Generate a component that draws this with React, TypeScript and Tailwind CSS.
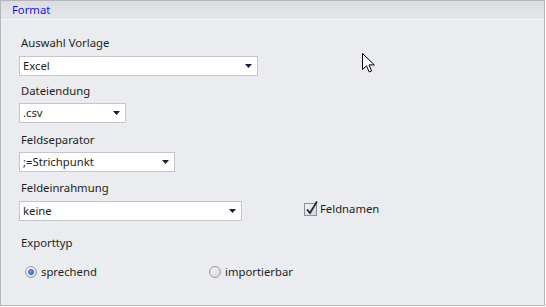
import React from 'react';

const font = { fontFamily: '"Noto Sans", "Open Sans", Arial, sans-serif' };

function Arrow() {
  return (
    <svg width="7" height="4" viewBox="0 0 7 4" className="block">
      <path d="M0 0H7L3.5 4Z" fill="#1b1b3a" />
    </svg>
  );
}

function Combo({ value, width }: { value: string; width: string }) {
  return (
    <div className={`${width} h-[20px] bg-white border border-[#c5c6cb] flex items-center justify-between pl-[3px] pr-[5px]`}>
      <span className="text-[11.3px] leading-[18px] text-[#1e1e1e]">{value}</span>
      <Arrow />
    </div>
  );
}

function Label({ children, className = '' }: { children: React.ReactNode; className?: string }) {
  return <div className={`pl-[2px] text-[11.3px] leading-[16px] text-[#1e1e1e] ${className}`}>{children}</div>;
}

function Radio({ checked }: { checked?: boolean }) {
  return (
    <span className="w-[12px] h-[12px] rounded-full border border-[#9a9ca3] bg-gradient-to-br from-[#f4f4f6] to-[#d6d7dc] flex items-center justify-center">
      {checked && <span className="w-[6px] h-[6px] rounded-full bg-gradient-to-br from-[#8fb4f0] to-[#2a5fc8] border border-[#3a64b8]" />}
    </span>
  );
}

export default function App() {
  return (
    <div className="w-[546px] h-[307px] bg-white" style={font}>
      <div className="relative w-[545px] h-[306px] border border-[#b4b6bd] bg-[#ebecef] flex flex-col">
        <div className="h-[19px] bg-gradient-to-b from-[#dcdde2] to-[#e6e7ea] border-b border-[#f6f6f8] flex items-center pl-[11px]">
          <span className="text-[11.3px] leading-[16px] text-[#1414f0]">Format</span>
        </div>

        <div className="flex flex-col pl-[18px] pt-[15px]">
          <Label>Auswahl Vorlage</Label>
          <div className="mt-[5px]"><Combo value="Excel" width="w-[239px]" /></div>

          <Label className="mt-[7px]">Dateiendung</Label>
          <div className="mt-[4px]"><Combo value=".csv" width="w-[107px]" /></div>

          <Label className="mt-[9px]">Feldseparator</Label>
          <div className="mt-[4px]"><Combo value=";=Strichpunkt" width="w-[156px]" /></div>

          <Label className="mt-[8px]">Feldeinrahmung</Label>
          <div className="mt-[5px] flex items-center">
            <Combo value="keine" width="w-[223px]" />
            <div className="ml-[62px] flex items-center gap-[3px] -mt-[4px]">
              <span className="relative w-[13px] h-[13px] border border-[#8e9097] bg-gradient-to-br from-[#f2f2f4] to-[#d4d5da]">
                <svg width="14" height="16" viewBox="0 0 14 16" className="absolute left-[0px] -top-[4px]">
                  <path d="M2 9.5L5 13L12 1.5" fill="none" stroke="#22263a" strokeWidth="1.8" />
                </svg>
              </span>
              <span className="text-[11.3px] leading-[16px] text-[#1e1e1e]">Feldnamen</span>
            </div>
          </div>

          <Label className="mt-[14px]">Exporttyp</Label>
          <div className="mt-[13px] flex items-center pl-[6px]">
            <div className="w-[184px] flex items-center gap-[4px]">
              <Radio checked />
              <span className="text-[11.3px] leading-[16px] text-[#1e1e1e]">sprechend</span>
            </div>
            <div className="flex items-center gap-[4px]">
              <Radio />
              <span className="text-[11.3px] leading-[16px] text-[#1e1e1e]">importierbar</span>
            </div>
          </div>
        </div>

        <svg width="13" height="20" viewBox="0 0 13 20" className="absolute left-[361px] top-[52px]">
          <path d="M0.5 0.5V16.5L4.5 12.8L7.2 19L9.6 18L7 11.9H12.3Z" fill="#fff" stroke="#000" strokeWidth="1" strokeLinejoin="miter" />
        </svg>
      </div>
    </div>
  );
}
